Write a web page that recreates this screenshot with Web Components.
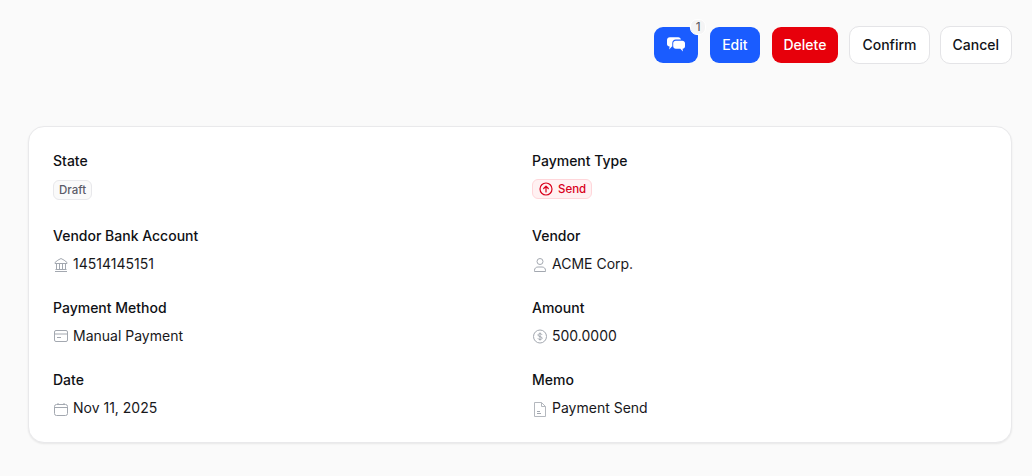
<!DOCTYPE html>
<html lang="en">
<head>
<meta charset="utf-8">
<title>Payment</title>
<style>
  html, body { margin: 0; background: #fafafa; }
  body { font-family: Inter, "Liberation Sans", sans-serif; color: #0f1115; }
</style>
</head>
<body>
<payment-page>
  <action-bar slot="actions">
    <ui-button variant="primary" icon badge="1" aria-label="Comments">
      <svg width="20" height="20" viewBox="0 0 20 20" fill="#fff">
        <path d="M3.800 2.200h8.400c1.500 0 2.600 1 2.800 2.300H9.800c-2 0-3.500 1.500-3.500 3.400v3.500H5.900l-2.700 3 .4-3C2 11.300 1 10.200 1 8.900V5c0-1.600 1.200-2.800 2.800-2.800z"/>
        <path d="M9.800 5.700h6.500c1.500 0 2.700 1.100 2.700 2.500v3c0 1.300-1 2.400-2.400 2.500l.3 2.900-2.600-2.900H9.800c-1.500 0-2.600-1.100-2.600-2.500v-3c0-1.400 1.100-2.500 2.600-2.500z"/>
      </svg>
    </ui-button>
    <ui-button variant="primary">Edit</ui-button>
    <ui-button variant="danger">Delete</ui-button>
    <ui-button>Confirm</ui-button>
    <ui-button>Cancel</ui-button>
  </action-bar>
  <detail-card slot="card">
    <detail-field label="State"><status-tag>Draft</status-tag></detail-field>
    <detail-field label="Payment Type">
      <status-tag tone="red">
        <svg slot="icon" width="14" height="14" viewBox="0 0 14 14" fill="none" stroke="#d9001b" stroke-width="1.2" stroke-linecap="round" stroke-linejoin="round">
          <circle cx="7" cy="7" r="6"/><path d="M7 10V4.400M4.700 6.500 7 4.200l2.300 2.300"/>
        </svg>Send</status-tag>
    </detail-field>
    <detail-field label="Vendor Bank Account">
      <svg slot="icon" width="16" height="16" viewBox="0 0 16 16" fill="none" stroke="#a3a8b0" stroke-width="1" stroke-linejoin="round">
        <path d="M2 5.500C3.800 3.800 5.800 2.400 8 1.500c2.200.9 4.200 2.300 6 4v1H2zM3.500 7v5.500M6.500 7v5.500M9.500 7v5.500M12.500 7v5.500M2.500 12.500h11M2 14.500h12"/>
      </svg>14514145151
    </detail-field>
    <detail-field label="Vendor">
      <svg slot="icon" width="16" height="16" viewBox="0 0 16 16" fill="none" stroke="#a3a8b0" stroke-width="1">
        <circle cx="8" cy="4.500" r="3"/><path d="M2.500 14.500v-1.200c0-2 1.600-3.300 3.400-3.300h4.200c1.800 0 3.400 1.300 3.400 3.300v1.200z" stroke-linejoin="round"/>
      </svg>ACME Corp.
    </detail-field>
    <detail-field label="Payment Method">
      <svg slot="icon" width="16" height="16" viewBox="0 0 16 16" fill="none" stroke="#a3a8b0" stroke-width="1">
        <rect x="1.500" y="1.500" width="13" height="11" rx="1.500"/><path d="M1.500 5h13M4 8.500h4" />
      </svg>Manual Payment
    </detail-field>
    <detail-field label="Amount">
      <svg slot="icon" width="16" height="16" viewBox="0 0 16 16" fill="none" stroke="#a3a8b0" stroke-width="1">
        <circle cx="8" cy="7.500" r="6.500"/><path d="M10 5.800C9.700 5 9 4.600 8 4.600c-1.200 0-2 .6-2 1.500 0 2 4.100 1 4.100 3 0 .9-.9 1.500-2.100 1.500-1 0-1.800-.5-2.100-1.300M8 3.500v8"/>
      </svg>500.0000
    </detail-field>
    <detail-field label="Date">
      <svg slot="icon" width="16" height="16" viewBox="0 0 16 16" fill="none" stroke="#a3a8b0" stroke-width="1">
        <rect x="1.500" y="3.500" width="13" height="11" rx="2"/><path d="M1.500 6.500h13M5 2v1.500M11 2v1.500"/>
      </svg>Nov 11, 2025
    </detail-field>
    <detail-field label="Memo">
      <svg slot="icon" width="16" height="16" viewBox="0 0 16 16" fill="none" stroke="#b4b8be" stroke-width="1" stroke-linejoin="round">
        <path d="M2.500 1.500h7l4 4v10h-11zM9.500 1.500v4h4"/>
        <path d="M5 10.500h3M5 12.500h4" stroke="#a3a8b0"/>
      </svg>Payment Send
    </detail-field>
  </detail-card>
</payment-page>
<script>
class PaymentPage extends HTMLElement {
  constructor() {
    super();
    this.attachShadow({ mode: 'open' }).innerHTML = `
      <style>
        :host { display: block; padding: 26px 20px 34px 28px; }
        .top { display: flex; justify-content: flex-end; margin-bottom: 62px; }
      </style>
      <div class="top"><slot name="actions"></slot></div>
      <slot name="card"></slot>`;
  }
}

class ActionBar extends HTMLElement {
  constructor() {
    super();
    this.attachShadow({ mode: 'open' }).innerHTML = `
      <style>:host { display: flex; gap: 10px; }</style>
      <slot></slot>`;
  }
}

class UiButton extends HTMLElement {
  constructor() {
    super();
    const badge = this.getAttribute('badge');
    this.attachShadow({ mode: 'open' }).innerHTML = `
      <style>
        :host { display: block; position: relative; }
        button {
          display: flex; align-items: center; justify-content: center;
          height: 38px; box-sizing: border-box;
          padding: 0 12px;
          font: 500 14px/20px Inter, sans-serif;
          color: #111318;
          background-color: #fff;
          background-clip: padding-box;
          border: 1px solid #e4e4e7;
          border-radius: 10px;
        }
        :host([variant="primary"]) button { background-color: #1a5cff; border-color: transparent; color: #fff; }
        :host([variant="danger"]) button { background-color: #e7000b; border-color: transparent; color: #fff; }
        .badge {
          position: absolute; top: -7px; right: -7px;
          width: 16px; height: 16px; box-sizing: border-box;
          display: flex; align-items: center; justify-content: center;
          font: 400 12px/1 Inter, sans-serif; color: #52525b;
          background: #f4f4f5; border: 1px solid #fff; border-radius: 7px;
        }
      </style>
      <button type="button"><slot></slot></button>
      ${badge ? `<span class="badge">${badge}</span>` : ''}`;
  }
}

class DetailCard extends HTMLElement {
  constructor() {
    super();
    this.attachShadow({ mode: 'open' }).innerHTML = `
      <style>
        :host {
          display: grid; grid-template-columns: 1fr 1fr; column-gap: 24px; row-gap: 24px;
          padding: 24px; background: #fff;
          border: 1px solid #e9e9eb; border-radius: 16px;
          box-shadow: 0 1px 2px rgba(0,0,0,.08);
        }
      </style>
      <slot></slot>`;
  }
}

class DetailField extends HTMLElement {
  constructor() {
    super();
    this.attachShadow({ mode: 'open' }).innerHTML = `
      <style>
        :host { display: flex; flex-direction: column; gap: 8px; }
        .label { font: 500 14px/20px Inter, sans-serif; color: #0f1115; }
        .value { display: flex; align-items: flex-start; gap: 4px; font: 400 14px/20px Inter, sans-serif; color: #18181b; }
        ::slotted(svg) { margin-top: 3px; flex: none; }
      </style>
      <div class="label">${this.getAttribute('label')}</div>
      <div class="value"><slot name="icon"></slot><slot></slot></div>`;
  }
}

class StatusTag extends HTMLElement {
  constructor() {
    super();
    this.attachShadow({ mode: 'open' }).innerHTML = `
      <style>
        :host {
          display: inline-flex; align-items: center; gap: 5px;
          height: 20px; box-sizing: border-box; margin: 1px 0 2px; padding: 0 5px;
          font: 500 11.5px/16px Inter, sans-serif; color: #5b5b68;
          background: #fafafa; border: 1px solid #e8e8eb; border-radius: 6px;
        }
        :host([tone="red"]) { margin: 0 0 3px; padding: 0 5px 0 6px; color: #d9001b; background: #fff1f2; border-color: #ffd6da; }
      </style>
      <slot name="icon"></slot><slot></slot>`;
  }
}

customElements.define('payment-page', PaymentPage);
customElements.define('action-bar', ActionBar);
customElements.define('ui-button', UiButton);
customElements.define('detail-card', DetailCard);
customElements.define('detail-field', DetailField);
customElements.define('status-tag', StatusTag);
</script>
</body>
</html>
